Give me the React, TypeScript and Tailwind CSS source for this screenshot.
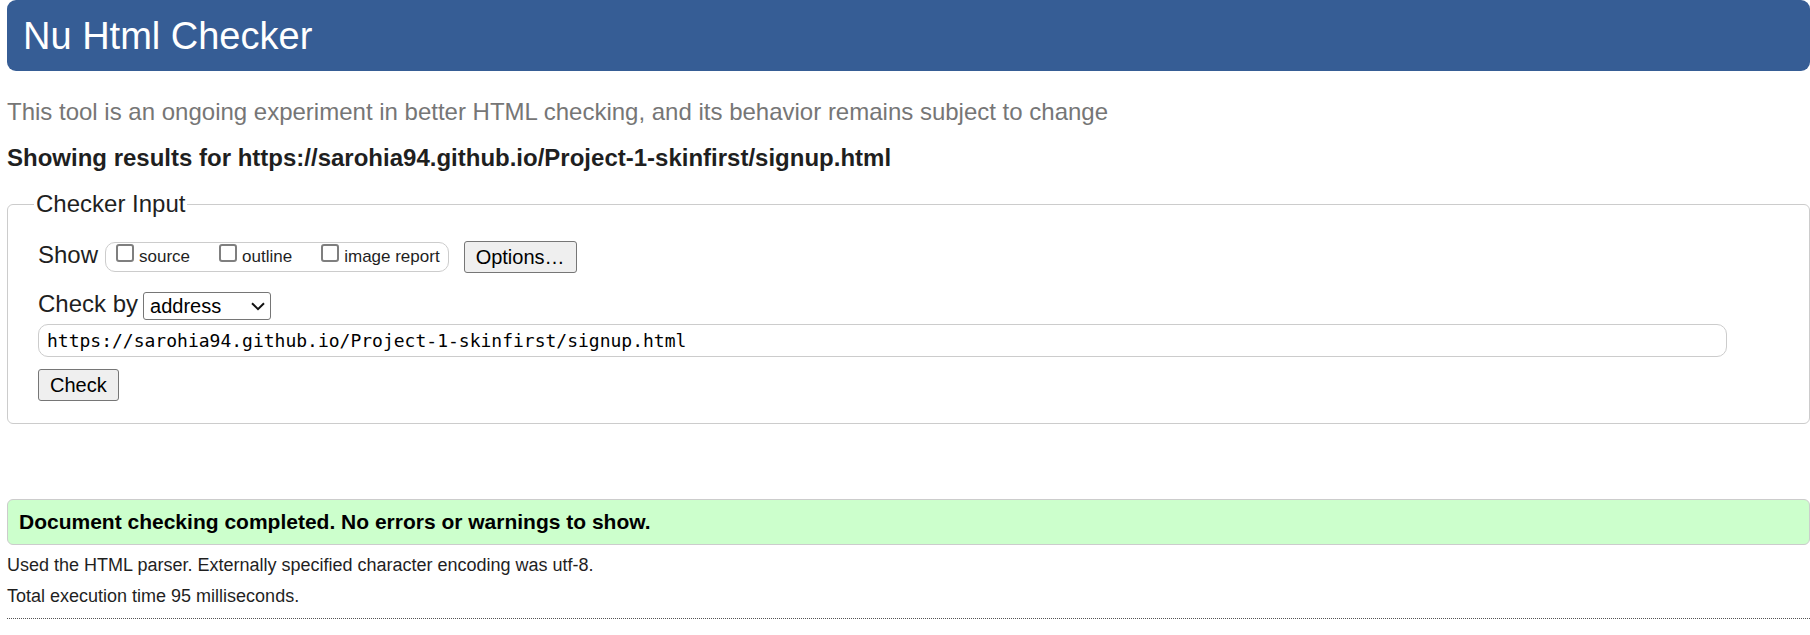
import React, { useState } from "react";

const reports = ["source", "outline", "image report"];

export default function App() {
  const [method, setMethod] = useState("address");
  const [address, setAddress] = useState(
    "https://sarohia94.github.io/Project-1-skinfirst/signup.html"
  );

  return (
    <div className="bg-white pl-[7px] font-['Liberation_Sans',Arial,sans-serif] text-2xl text-[#1f1f1f]">
      <header className="rounded-[9px] bg-[#365d95] px-4 pt-[14px] pb-[13px]">
        <h1 className="text-[38px] leading-[44px] text-white">Nu Html Checker</h1>
      </header>

      <main>
        <p className="mt-[25px] leading-8 text-[#767676]">
          This tool is an ongoing experiment in better HTML checking, and its behavior remains
          subject to change
        </p>
        <h2 className="mt-[14px] leading-8 font-bold">
          Showing results for https://sarohia94.github.io/Project-1-skinfirst/signup.html
        </h2>

        <form onSubmit={(e) => e.preventDefault()}>
          <fieldset className="mt-4 rounded-md border border-[#ccc] px-[30px] pb-[22px]">
            <legend className="-ml-1 px-[2px] leading-7">Checker Input</legend>

            <div className="mt-[23px] flex items-center">
              <span className="mr-[7px] pb-1 leading-7">Show</span>
              <div className="flex h-[30px] gap-[29px] rounded-[10px] border border-[#ccc] pr-2 pl-[10px] text-[17px]">
                {reports.map((name) => (
                  <label key={name} className="flex items-start gap-[5px]">
                    <input
                      type="checkbox"
                      name={name}
                      className="mt-[1px] size-[18px] appearance-none rounded-[3px] border-2 border-[#7f7f7f] bg-white checked:border-[#0075ff] checked:bg-[#0075ff]"
                    />
                    <span className="pt-[2px] leading-6">{name}</span>
                  </label>
                ))}
              </div>
              <button
                type="button"
                className="ml-[15px] h-8 rounded-[3px] border border-[#767676] bg-[#efefef] px-[11px] text-xl leading-6 text-black"
              >
                Options…
              </button>
            </div>

            <div className="mt-[17px] flex items-center">
              <label htmlFor="method" className="mr-[5px] pb-1 leading-7">
                Check by
              </label>
              <div className="relative">
                <select
                  id="method"
                  value={method}
                  onChange={(e) => setMethod(e.target.value)}
                  className="block h-7 w-32 appearance-none rounded-[3px] border border-[#767676] bg-white pl-[6px] text-xl leading-6 text-black"
                >
                  <option value="address">address</option>
                  <option value="upload">file upload</option>
                  <option value="text">text input</option>
                </select>
                <svg
                  aria-hidden="true"
                  viewBox="0 0 14 9"
                  className="pointer-events-none absolute top-[10px] right-[6px] h-[9px] w-[14px]"
                >
                  <path d="M1 1.2 7 7.2 13 1.2" fill="none" stroke="#111" strokeWidth="2" />
                </svg>
              </div>
            </div>

            <input
              type="url"
              aria-label="Address of page to check"
              value={address}
              onChange={(e) => setAddress(e.target.value)}
              className="mt-[2px] block h-[33px] w-[97%] rounded-[10px] border border-[#ccc] px-2 font-['DejaVu_Sans_Mono',monospace] text-lg text-black"
            />

            <button
              type="submit"
              className="mt-3 block h-8 rounded-[3px] border border-[#767676] bg-[#efefef] px-[11px] text-xl leading-6 text-black"
            >
              Check
            </button>
          </fieldset>
        </form>

        <section className="mt-[75px]">
          <p className="rounded-md border border-[#ccc] bg-[#ccffcc] px-[11px] py-[9px] text-[21px] leading-[26px] font-bold text-black">
            Document checking completed. No errors or warnings to show.
          </p>
          <div className="border-b border-dotted border-[#555] pt-[5px] pb-[6px] text-[18px] leading-[31px]">
            <p>Used the HTML parser. Externally specified character encoding was utf-8.</p>
            <p>Total execution time 95 milliseconds.</p>
          </div>
        </section>
      </main>
    </div>
  );
}
